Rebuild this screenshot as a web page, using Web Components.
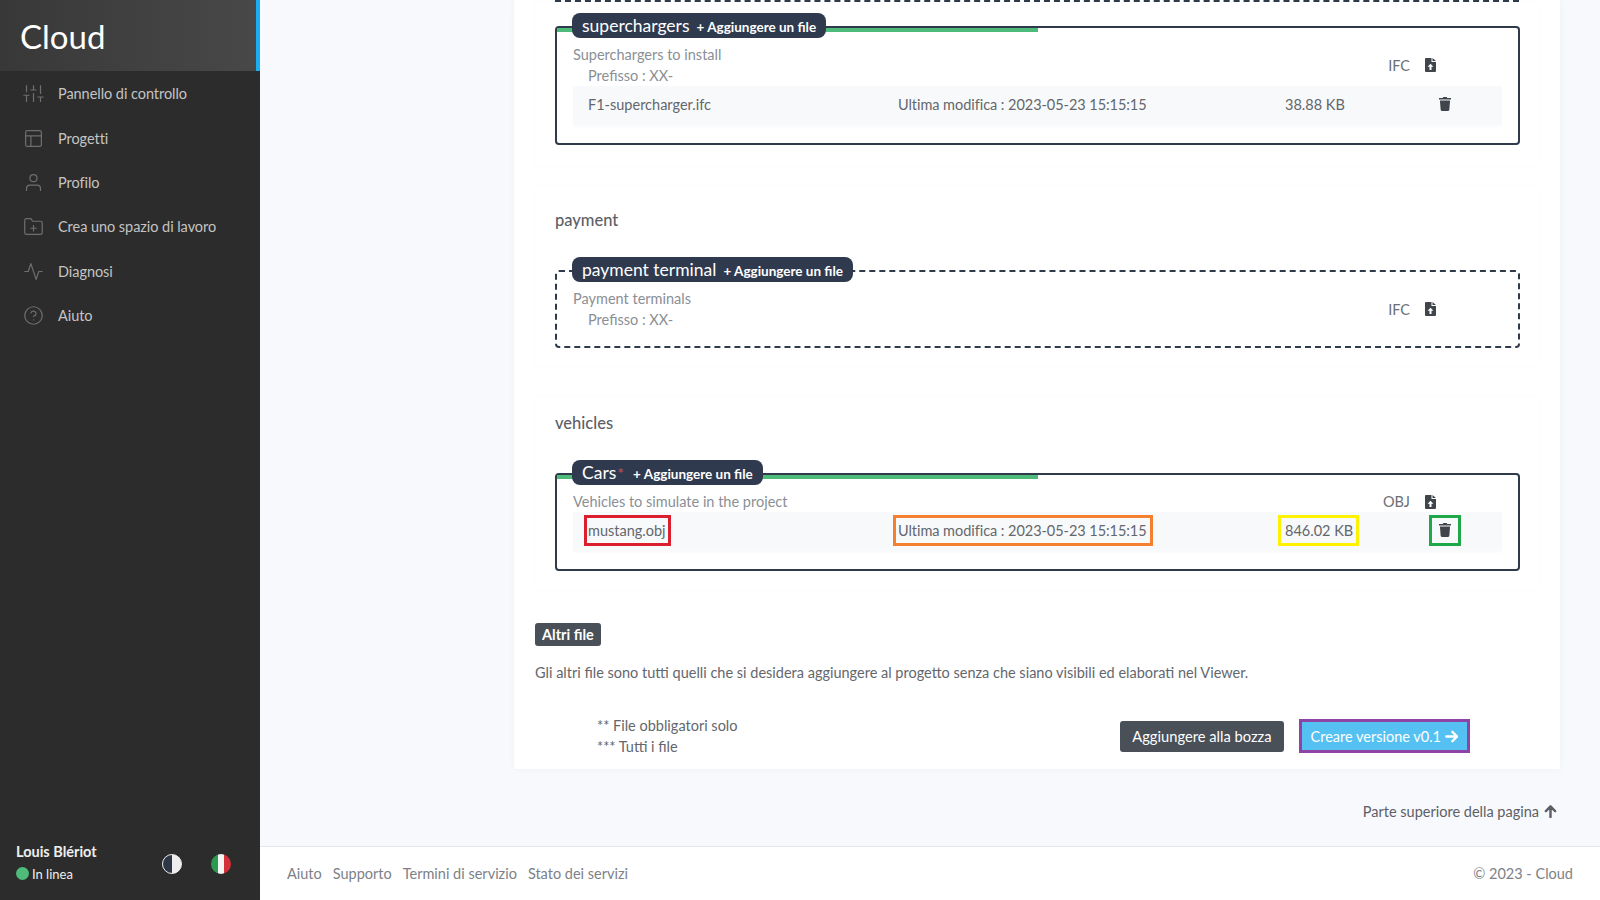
<!DOCTYPE html>
<html>
<head>
<meta charset="utf-8">
<style>
  html, body { margin: 0; height: 100%; overflow: hidden; }
  body { font-family: Lato, "Noto Sans", sans-serif; font-size: 14.5px; color: #63676d; }
</style>
</head>
<body>
<project-files>
  <file-box slot="s1" done h="119" name="superchargers" desc="Superchargers to install" prefix="XX-" ext="IFC"><file-row name="F1-supercharger.ifc" size="38.88 KB"></file-row></file-box>
  <file-box slot="s2" h="78" name="payment terminal" desc="Payment terminals" prefix="XX-" ext="IFC"></file-box>
  <file-box slot="s3" done req h="98" name="Cars" desc="Vehicles to simulate in the project" ext="OBJ"><file-row marked name="mustang.obj" size="846.02 KB"></file-row></file-box>
</project-files>
<script>
const ICONS = {
  sliders: '<path d="M4 21v-7M4 10V3M12 21v-9M12 8V3M20 21v-5M20 12V3M1 14h6M9 8h6M17 16h6"/>',
  layout: '<rect x="3" y="3" width="18" height="18" rx="2"/><path d="M3 9h18M9 21V9"/>',
  user: '<path d="M20 21v-2a4 4 0 0 0-4-4H8a4 4 0 0 0-4 4v2"/><circle cx="12" cy="7" r="4"/>',
  folder: '<path d="M22 19a2 2 0 0 1-2 2H4a2 2 0 0 1-2-2V5a2 2 0 0 1 2-2h5l2 3h9a2 2 0 0 1 2 2z"/><path d="M12 11v6M9 14h6"/>',
  activity: '<path d="M22 12h-4l-3 9L9 3l-3 9H2"/>',
  help: '<circle cx="12" cy="12" r="10"/><path d="M9.1 9a3 3 0 0 1 5.8 1c0 2-3 3-3 3"/><path d="M12 17h.01"/>'
};

class SideBar extends HTMLElement {
  constructor() {
    super();
    this.attachShadow({ mode: 'open' });
  }
  connectedCallback() {
    const items = [
      ['sliders', 'Pannello di controllo'],
      ['layout', 'Progetti'],
      ['user', 'Profilo'],
      ['folder', 'Crea uno spazio di lavoro'],
      ['activity', 'Diagnosi'],
      ['help', 'Aiuto']
    ];
    this.shadowRoot.innerHTML = `
      <style>
        :host { display: flex; flex-direction: column; width: 260px; flex: none; background: #2c2c2c; color: #c4c4c4; }
        .brand { height: 71px; box-sizing: border-box; padding-left: 20px; display: flex; align-items: center; background: linear-gradient(90deg, #383838, #484848); border-right: 4px solid #1aaef0; color: #fff; font-size: 33px; }
        nav { display: flex; flex-direction: column; padding-top: .5px; }
        a { height: 44.4px; display: flex; align-items: center; padding-left: 22.5px; gap: 14.5px; font-size: 14.5px; letter-spacing: -.05px; }
        svg { width: 21px; height: 21px; fill: none; stroke: #6e6e6e; stroke-width: 1.4; stroke-linecap: round; stroke-linejoin: round; flex: none; }
        .foot { margin-top: auto; height: 76px; box-sizing: border-box; padding: 0 29px 0 16px; display: flex; align-items: center; justify-content: space-between; color: #eee; }
        .who { font-size: 14.5px; font-weight: 700; }
        .on { font-size: 13px; display: flex; align-items: center; gap: 3px; margin-top: 6px; }
        .dot { width: 13px; height: 13px; border-radius: 50%; background: #4fbb7a; }
        .tools { display: flex; gap: 29px; align-items: center; margin-top: 4px; }
        .ball { width: 20px; height: 20px; border-radius: 50%; }
        .contrast { background: linear-gradient(90deg, #2d3748 50%, #eee 50%); border: 1px solid #eee; box-sizing: border-box; }
        .flag { background: linear-gradient(90deg, #2b9a50 33%, #f4f4f4 33% 66%, #d3303c 66%); }
      </style>
      <div class="brand">Cloud</div>
      <nav>${items.map(([i, t]) => `<a><svg viewBox="0 0 24 24">${ICONS[i]}</svg><span>${t}</span></a>`).join('')}</nav>
      <div class="foot">
        <div><div class="who">Louis Blériot</div><div class="on"><span class="dot"></span>In linea</div></div>
        <div class="tools"><span class="ball contrast"></span><span class="ball flag"></span></div>
      </div>`;
  }
}

class FileRow extends HTMLElement {
  constructor() {
    super();
    this.attachShadow({ mode: 'open' });
  }
  connectedCallback() {
    const mark = this.hasAttribute('marked') ? 'mark' : '';
    this.shadowRoot.innerHTML = `
      <style>
        :host { display: grid; grid-template-columns: 325px 387px 145px 30px; height: 39px; box-sizing: border-box; padding-bottom: 3px; align-items: center; background: #f8f9fa; box-shadow: 0 2px 3px rgba(0,0,0,.02); color: #63676d; line-height: 17px; }
        span { justify-self: start; box-sizing: border-box; }
        .n { margin-left: 15px; }
        .d { letter-spacing: -.05px; }
        .n.mark { margin-left: 11px; border: 3px solid #dc1f2e; padding: 4px 2px 4px 1px; }
        .d.mark { border: 3px solid #f58030; padding: 4px 3px 4px 2px; margin-left: -5px; }
        .s.mark { border: 3px solid #fff200; padding: 4px 3px 4px 4px; margin-left: -7px; }
        .t { justify-self: center; display: flex; }
        .t.mark { border: 3px solid #1fa84a; padding: 5px 7px 6px; }
        svg { width: 12px; height: 14px; fill: #40454c; display: block; }
      </style>
      <span class="n ${mark}">${this.getAttribute('name')}</span>
      <span class="d ${mark}">Ultima modifica : 2023-05-23 15:15:15</span>
      <span class="s ${mark}">${this.getAttribute('size')}</span>
      <span class="t ${mark}"><svg viewBox="0 0 13 15"><path d="M4.6 0h3.800l.5 1H13v1.600H0V1h4.100zM1 3.600h11l-.8 10.200a1.300 1.300 0 0 1-1.300 1.200H3.100a1.300 1.300 0 0 1-1.300-1.200z"/></svg></span>`;
  }
}

class FileBox extends HTMLElement {
  constructor() {
    super();
    this.attachShadow({ mode: 'open' });
  }
  connectedCallback() {
    const done = this.hasAttribute('done');
    const prefix = this.getAttribute('prefix');
    this.shadowRoot.innerHTML = `
      <style>
        :host { display: block; box-sizing: border-box; position: relative; border: 2px ${done ? 'solid' : 'dashed'} #2f3a4a; border-radius: 4px; padding: 16px 16px 0; height: ${this.getAttribute('h')}px; }
        .bar { position: absolute; left: 0; top: 0; width: 50%; height: 4px; background: #4fbb7a; }
        .pill { position: absolute; left: 15px; top: -15px; height: 25px; box-sizing: border-box; background: #2f3a4f; color: #fff; border-radius: 8px; padding: 0 10px; display: flex; align-items: center; gap: 7px; font-size: 17.5px; white-space: nowrap; }
        .pill b { font-size: 13.5px; font-weight: 700; margin-top: 2px; }
        sup { color: #c8505c; font-size: 16px; line-height: 0; margin-left: -6px; margin-right: 2px; }
        .head { display: flex; justify-content: space-between; color: #8a8f96; }
        .txt { line-height: 21px; }
        .pre { padding-left: 15px; }
        .ext { display: flex; align-items: center; gap: 15px; padding-right: 66px; color: #6c7076; align-self: center; }
        svg { width: 11px; height: 14px; display: block; }
      </style>
      ${done ? '<div class="bar"></div>' : ''}
      <div class="pill">${this.getAttribute('name')}${this.hasAttribute('req') ? '<sup>*</sup>' : ''}<b>+ Aggiungere un file</b></div>
      <div class="head">
        <div class="txt">${this.getAttribute('desc')}${prefix ? `<div class="pre">Prefisso : ${prefix}</div>` : ''}</div>
        <div class="ext">${this.getAttribute('ext')}<svg viewBox="0 0 11 14"><path fill="#40454c" fill-rule="evenodd" d="M1 0h5.500v4H11v9a1 1 0 0 1-1 1H1a1 1 0 0 1-1-1V1a1 1 0 0 1 1-1zM7.500 0 11 3H7.500zM5.500 5.800 2.600 8.800h1.900V12h2V8.800h1.900z"/></svg></div>
      </div>
      <slot></slot>`;
  }
}

class FileSection extends HTMLElement {
  constructor() {
    super();
    this.attachShadow({ mode: 'open' });
  }
  connectedCallback() {
    const title = this.getAttribute('title-text');
    this.shadowRoot.innerHTML = `
      <style>
        :host { display: block; margin: 0 21px; padding: 0 19px 0 20px; background: #fff; box-shadow: 0 0 6px rgba(30,50,90,.02); }
        h3 { margin: 0 0 40px; font-size: 16.5px; font-weight: 500; color: #5c6066; height: 20px; line-height: 20px; }
      </style>
      ${title ? `<h3>${title}</h3>` : ''}
      <slot></slot>`;
  }
}

class AppFooter extends HTMLElement {
  constructor() {
    super();
    this.attachShadow({ mode: 'open' });
  }
  connectedCallback() {
    this.shadowRoot.innerHTML = `
      <style>
        :host { display: flex; flex: none; height: 54px; box-sizing: border-box; background: #fff; border-top: 1px solid #e4e6ea; align-items: center; justify-content: space-between; padding: 0 27px; color: #7d8187; }
        div { display: flex; gap: 11px; }
      </style>
      <div><span>Aiuto</span><span>Supporto</span><span>Termini di servizio</span><span>Stato dei servizi</span></div>
      <span>© 2023 - Cloud</span>`;
  }
}

class ProjectFiles extends HTMLElement {
  constructor() {
    super();
    this.attachShadow({ mode: 'open' });
  }
  connectedCallback() {
    this.shadowRoot.innerHTML = `
      <style>
        :host { display: flex; height: 100vh; }
        .main { flex: 1; min-width: 0; display: flex; flex-direction: column; background: #f7f9fc; }
        .scroll { flex: 1; min-height: 0; overflow: hidden; padding: 0 40px 0 254px; }
        .card { background: #fff; height: 769px; box-sizing: border-box; box-shadow: 0 0 8px rgba(30,50,90,.04); display: flow-root; }
        .cut { height: 0; margin: 0 41px 0 41px; border-bottom: 2px dashed #2f3a4a; }
        .s1 { height: 164px; padding-top: 24px; box-sizing: border-box; }
        .s2 { margin-top: 21px; height: 179px; padding-top: 23px; box-sizing: border-box; }
        .s3 { margin-top: 31px; height: 192px; padding-top: 16px; box-sizing: border-box; }
        .other { margin: 34px 21px 0; }
        .tag { display: inline-block; background: #495057; color: #fff; border-radius: 3px; font-weight: 700; height: 23px; line-height: 23px; padding: 0 7px; }
        .other p { margin: 17px 0 0; line-height: 20px; }
        .act { display: flex; align-items: center; margin: 32px 90px 0 83px; }
        .notes { line-height: 21px; flex: 1; }
        .btn { box-sizing: border-box; height: 31px; display: flex; align-items: center; gap: 3px; color: #fff; background: #495057; border-radius: 3px; padding: 0 12px; font-size: 14.7px; }
        .go { height: 34px; background: #55c1f2; border: 3px solid #8e44a5; border-radius: 0; margin-left: 15px; padding: 0 9px; gap: 4px; font-size: 14.5px; }
        .up { display: flex; justify-content: flex-end; align-items: center; gap: 5px; margin-top: 34px; padding-right: 3px; color: #5c6066; }
        .up svg, .go svg { width: 13px; height: 13px; fill: none; stroke: currentColor; stroke-width: 2.6; stroke-linecap: round; stroke-linejoin: round; }
      </style>
      <side-bar></side-bar>
      <div class="main">
        <div class="scroll">
          <div class="card">
            <div class="cut"></div>
            <file-section class="s1"><slot name="s1"></slot></file-section>
            <file-section class="s2" title-text="payment"><slot name="s2"></slot></file-section>
            <file-section class="s3" title-text="vehicles"><slot name="s3"></slot></file-section>
            <div class="other">
              <span class="tag">Altri file</span>
              <p>Gli altri file sono tutti quelli che si desidera aggiungere al progetto senza che siano visibili ed elaborati nel Viewer.</p>
            </div>
            <div class="act">
              <div class="notes">** File obbligatori solo<br>*** Tutti i file</div>
              <div class="btn">Aggiungere alla bozza</div>
              <div class="btn go">Creare versione v0.1 <svg viewBox="0 0 14 14"><path d="M1.500 7h11M8 2l5 5-5 5"/></svg></div>
            </div>
          </div>
          <div class="up">Parte superiore della pagina <svg viewBox="0 0 14 14"><path d="M7 13V1.500M2 6.500l5-5 5 5"/></svg></div>
        </div>
        <app-footer></app-footer>
      </div>`;
  }
}

customElements.define('side-bar', SideBar);
customElements.define('file-row', FileRow);
customElements.define('file-box', FileBox);
customElements.define('file-section', FileSection);
customElements.define('app-footer', AppFooter);
customElements.define('project-files', ProjectFiles);
</script>
</body>
</html>
